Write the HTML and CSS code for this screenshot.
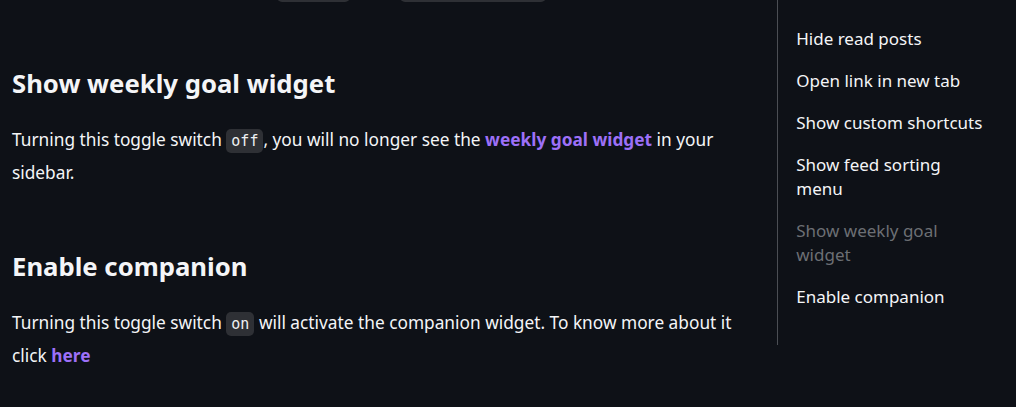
FILE: index.html
```html
<!DOCTYPE html>
<html lang="en">
<head>
<meta charset="utf-8">
<title>Customize feed settings</title>
<link rel="stylesheet" href="styles.css">
</head>
<body>
<div class="page">
  <main class="doc">
    <p class="prev">Sort all your feed by options like <code>popular</code> or by <code>recent_activity</code></p>
    <h2 class="title">Show weekly goal widget</h2>
    <p class="text">Turning this toggle switch <code>off</code>, you will no longer see the <a class="link" href="#">weekly goal widget</a> in your sidebar.</p>
    <h2 class="title second">Enable companion</h2>
    <p class="text">Turning this toggle switch <code>on</code> will activate the companion widget. To know more about it click <a class="link" href="#">here</a></p>
  </main>
  <aside class="toc">
    <ul class="toc-list">
      <li class="toc-item">Hide read posts</li>
      <li class="toc-item">Open link in new tab</li>
      <li class="toc-item">Show custom shortcuts</li>
      <li class="toc-item">Show feed sorting menu</li>
      <li class="toc-item active">Show weekly goal widget</li>
      <li class="toc-item">Enable companion</li>
    </ul>
  </aside>
</div>
</body>
</html>
```

FILE: styles.css
```css
html, body {
  margin: 0;
  padding: 0;
  background: #0e1117;
}

body {
  font-family: "Noto Sans", "Open Sans", sans-serif;
  color: #f4f5f7;
  overflow: hidden;
}

.page {
  display: flex;
  align-items: flex-start;
  height: 407px;
}

.doc {
  width: 740px;
  padding-left: 12px;
  margin-top: -27px;
}

.prev {
  margin: 0;
  font-size: 17.3px;
  line-height: 32px;
}

.title {
  margin: 60px 0 0;
  font-size: 25.7px;
  line-height: 36px;
  font-weight: 700;
}

.title.second {
  margin-top: 60px;
}

.text {
  margin: 22px 0 0;
  font-size: 17.3px;
  line-height: 32px;
}

code {
  font-family: "DejaVu Sans Mono", "Liberation Mono", monospace;
  font-size: 15px;
  background: #2e3035;
  border-radius: 5px;
  padding: 3px 5px;
  color: #eef0f2;
}

.link {
  color: #9d70f8;
  font-weight: 700;
  text-decoration: none;
}

.toc {
  margin-left: 26px;
  width: 220px;
  border-left: 1px solid #4b4e54;
  padding-left: 18px;
  padding-top: 27px;
  padding-bottom: 36px;
}

.toc-list {
  list-style: none;
  margin: 0;
  padding: 0;
  display: flex;
  flex-direction: column;
  gap: 18px;
}

.toc-item {
  font-size: 17px;
  line-height: 24px;
  color: #f4f5f7;
  width: 192px;
}

.toc-item.active {
  color: #6c6f74;
}
```
